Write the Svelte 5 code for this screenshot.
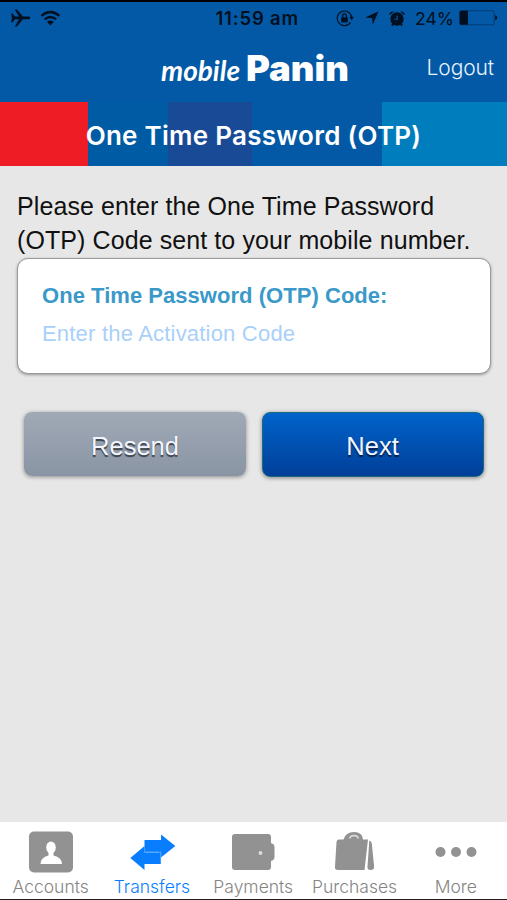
<script lang="ts">
  type Tab = {
    id: string;
    label: string;
  };

  const tabs: Tab[] = [
    { id: "accounts", label: "Accounts" },
    { id: "transfers", label: "Transfers" },
    { id: "payments", label: "Payments" },
    { id: "purchases", label: "Purchases" },
    { id: "more", label: "More" },
  ];

  let active = $state("transfers");
  let code = $state("");
</script>

<div class="screen">
  <div class="status-bar">
    <div class="status-left">
      <svg width="21" height="18" viewBox="0 0 21 18">
        <path d="M1 4.5h1.6L5 7.6h4L4.8.5h2.1l6 7.1h5.6q1.7 0 1.7 1.3t-1.7 1.3h-5.6l-6 7.3H4.8L9 10.2H5l-2.4 3H1l1-4.3z" />
      </svg>
      <svg width="21" height="16" viewBox="0 0 21 16" fill="none" stroke="#001020" stroke-width="2.2">
        <path d="M1.4 5.9Q10.4-1.9 19.4 5.9M4.6 9.4q5.8-4.8 11.6 0" />
        <path d="M7 11.8q3.400-2.600 6.800 0L10.400 15.500z" fill="#001020" stroke="none" />
      </svg>
    </div>
    <span class="time">11:59 am</span>
    <div class="status-right">
      <svg class="lock" width="18" height="17" viewBox="0 0 18 17" fill="none" stroke="#001020">
        <path d="M14.6 12.4A7.3 7.3 0 1 1 15.7 7" stroke-width="1.1" />
        <path d="M13.4 6.8h4.4l-2.1 3.6z" fill="#001020" stroke="none" />
        <path d="M5.2 7.4h6.6v5H5.2z" fill="#001020" stroke="none" />
        <path d="M6.6 8V5.8q0-2 1.9-2t1.9 2V8" stroke-width="1.3" />
      </svg>
      <svg class="arrow" width="14" height="14" viewBox="0 0 14 14">
        <path d="M13.6.2 7.8 13.6 7 7 .2 6.600z" />
      </svg>
      <svg class="alarm" width="16" height="17" viewBox="0 0 16 17">
        <circle cx="8" cy="9" r="6.700" />
        <path d="M.6 5.2Q-.1 1.2 4.9 1.6zM15.4 5.2Q16.1 1.2 11.1 1.6zM3.7 13l1.6 1.300-1.700 1.900-1.400-1.200zM12.300 13l-1.600 1.300 1.700 1.900 1.400-1.200z" />
        <path d="M8.200 5.500v3.700H5.400" fill="none" stroke="#0359a5" stroke-width="1.100" />
      </svg>
      <span class="percent">24%</span>
      <svg class="battery" width="39" height="16" viewBox="0 0 39 16">
        <rect x=".6" y=".8" width="34.5" height="14" rx="2" fill="none" stroke="#023d79" stroke-width="1.1" />
        <path d="M2.2.8H9v14H2.2Q.7 14.8.7 13.3v-11Q.7.8 2.2.8z" />
        <path d="M36.2 5q2 1 2 2.8t-2 2.8z" />
      </svg>
    </div>
  </div>

  <header class="header">
    <svg class="logo" width="192" height="48" viewBox="0 0 192 48">
      <text class="logo-mobile" x="2" y="37" textLength="79" lengthAdjust="spacingAndGlyphs">mobile</text>
      <text class="logo-panin" x="87" y="37" textLength="103" lengthAdjust="spacingAndGlyphs">Panin</text>
    </svg>
    <button class="logout">Logout</button>
  </header>

  <div class="title-bar">
    <h1>One Time Password (OTP)</h1>
  </div>

  <main>
    <p class="message">
      <span>Please enter the One Time Password</span><br />
      <span>(OTP) Code sent to your mobile number.</span>
    </p>

    <label class="field">
      <span class="field-label">One Time Password (OTP) Code:</span>
      <input type="text" placeholder="Enter the Activation Code" bind:value={code} />
    </label>

    <div class="actions">
      <button class="action resend">Resend</button>
      <button class="action next">Next</button>
    </div>
  </main>

  <nav class="tab-bar">
    {#each tabs as tab}
      <button class="tab" class:active={active === tab.id} onclick={() => (active = tab.id)}>
        <svg width="48" height="46" viewBox="0 0 48 46">
          {#if tab.id === "accounts"}
            <rect x="2" y="2.5" width="44" height="41" rx="5" />
            <ellipse cx="24" cy="18.600" rx="4.800" ry="6" fill="#fff" />
            <path d="M21.500 22h5v4.500q8.500 2 8.500 8.500H13.500q0-6.500 8-8.500z" fill="#fff" />
          {:else if tab.id === "transfers"}
            <path d="M16.500 11H33V5.500L47.300 17 33 28.500V23H16.500z" />
            <path d="M16.500 17v6H33v12H16.500v6L2.300 29z" />
            <path d="M16.500 23.200H31.500" stroke="#9bcbff" stroke-width=".8" />
            <path d="M32.800 22.500V35" stroke="#9bcbff" stroke-width=".6" />
          {:else if tab.id === "payments"}
            <path d="M6 5h33q3 0 3 3v6q3.500 1 3.500 4v10q0 3-3.500 4v6q0 3-3 3H6q-3 0-3-3V8q0-3 3-3z" />
            <circle cx="31.500" cy="24" r="1.900" fill="#ddd" />
          {:else if tab.id === "purchases"}
            <path d="M7.500 10.500h5Q14.500 3 23 3T32 10.500h5l-3.500 30.500H7Q3.500 41 4 37.500L5.500 13q.3-2.500 2-2.500z" />
            <path d="M18.500 9.500q1-3 4.500-3t4.500 3" fill="none" stroke="#ddd" stroke-width="1.300" />
            <path d="M38.300 11.500q2 .5 2.500 3l2.300 23q.1 3.500-3.300 3.500-3.800 0-3.300-3.500z" />
          {:else}
            <circle cx="8.500" cy="23" r="5" />
            <circle cx="24" cy="23" r="5" />
            <circle cx="39.500" cy="23" r="5" />
          {/if}
        </svg>
        <span>{tab.label}</span>
      </button>
    {/each}
  </nav>
</div>

<style>
  :global(body) {
    margin: 0;
    background: #e7e7e7;
  }

  .screen {
    display: flex;
    flex-direction: column;
    box-sizing: border-box;
    width: 507px;
    height: 900px;
    border-top: 2px solid #000;
    border-bottom: 1px solid #231f20;
    background: #e7e7e7;
    font-family: "Liberation Sans", Arial, sans-serif;
    overflow: hidden;
  }

  button {
    margin: 0;
    padding: 0;
    border: 0;
    background: none;
    font-family: inherit;
    cursor: pointer;
  }

  svg {
    display: block;
    flex-shrink: 0;
  }

  .status-bar {
    display: grid;
    grid-template-columns: 1fr 84px 1fr;
    align-items: center;
    height: 32px;
    padding: 0 9px 0 17px;
    background: #0359a5;
    color: #001020;
    fill: #001020;
    font-family: Inter, sans-serif;
    white-space: nowrap;
  }

  .status-left,
  .status-right {
    display: flex;
    align-items: center;
  }

  .status-left {
    gap: 9px;
    margin-left: -7px;
  }

  .status-right {
    justify-content: flex-end;
  }

  .time {
    font-size: 18.500px;
    font-weight: 600;
    letter-spacing: 0.8px;
  }

  .arrow {
    margin: 0 10px 0 11px;
  }

  .percent {
    margin: 0 5px 0 10px;
    font-size: 17.500px;
  }

  .header {
    display: grid;
    grid-template-columns: 1fr 192px 1fr;
    align-items: center;
    height: 68px;
    background: #0359a5;
  }

  .logo {
    grid-column: 2;
    margin-left: 1px;
    fill: #fff;
  }

  .logo-mobile {
    font: italic 700 28px Lato, sans-serif;
  }

  .logo-panin {
    font: 900 35px Inter, sans-serif;
  }

  .logout {
    justify-self: end;
    margin: -2px 13px 0 0;
    color: #e8f2ff;
    font-family: Inter, sans-serif;
    font-size: 21px;
    font-weight: 300;
    letter-spacing: -0.1px;
  }

  .title-bar {
    display: flex;
    align-items: center;
    justify-content: center;
    height: 63.500px;
    background: linear-gradient(90deg, #ee1c25 88px, #005ba5 88px 168px, #194a96 168px 252px, #0359a5 252px 382px, #007dbd 382px);
  }

  h1 {
    margin: 3px 0 0;
    color: #fff;
    font-family: Inter, sans-serif;
    font-size: 26px;
    font-weight: 600;
    letter-spacing: 0.27px;
    white-space: nowrap;
  }

  main {
    flex: 1;
    padding: 24.500px 16px 0 17px;
  }

  .message {
    margin: 0;
    color: #111;
    font-size: 25px;
    letter-spacing: 0.09px;
    line-height: 33.500px;
    white-space: nowrap;
  }

  .field {
    display: flex;
    flex-direction: column;
    box-sizing: border-box;
    height: 116px;
    margin-top: 1px;
    padding: 23px 23px 0 24px;
    border: 1.500px solid #999;
    border-radius: 11px;
    background: #fff;
    box-shadow: 0 1px 3px rgba(0, 0, 0, 0.35);
  }

  .field-label {
    color: #3a99c9;
    font-size: 22px;
    font-weight: 700;
    letter-spacing: 0.04px;
    line-height: 27px;
    white-space: nowrap;
  }

  input {
    height: 30px;
    margin-top: 10px;
    padding: 0;
    border: 0;
    outline: 0;
    background: transparent;
    color: #3a99c9;
    font-family: inherit;
    font-size: 22px;
    letter-spacing: 0.2px;
  }

  input::placeholder {
    color: #a9d0fa;
    opacity: 1;
  }

  .actions {
    display: grid;
    grid-template-columns: 222px 222px;
    gap: 15.500px;
    margin: 38px 0 0 7px;
  }

  .action {
    height: 65px;
    padding-top: 4px;
    border-radius: 8px;
    color: #f3f5ff;
    font-size: 25.500px;
    text-shadow: 0 2px 1px rgba(0, 0, 0, 0.6);
  }

  .resend {
    height: 64px;
    background: linear-gradient(#a0a9b6, #8a95a4);
    box-shadow: 0 1px 4px rgba(0, 0, 0, 0.4);
  }

  .next {
    border: 1px solid #1d6a7e;
    background: linear-gradient(#0063cb, #003f98);
    box-shadow: 0 1px 4px rgba(0, 0, 0, 0.45);
  }

  .tab-bar {
    display: grid;
    grid-template-columns: repeat(5, 101.300px);
    height: 77px;
    background: #fff;
  }

  .tab {
    display: flex;
    flex-direction: column;
    align-items: center;
    padding-top: 7px;
    color: #858585;
    fill: #929292;
    font-family: Inter, sans-serif;
    font-size: 17.500px;
    font-weight: 300;
    line-height: 24px;
  }

  .tab.active {
    color: #087eff;
    fill: #087eff;
  }
</style>
